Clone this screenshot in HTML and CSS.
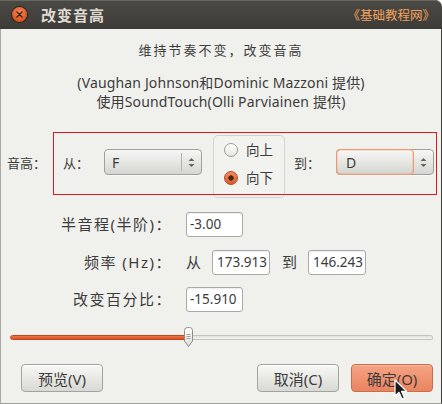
FILE: index.html
```html
<!DOCTYPE html>
<html>
<head>
<meta charset="utf-8">
<link rel="stylesheet" href="styles.css">
</head>
<body>
<div class="window">
  <div class="titlebar">
    <span class="close"><svg width="7" height="7" viewBox="0 0 7 7"><path d="M1 1L6 6M6 1L1 6" stroke="#3b1e12" stroke-width="1.4" stroke-linecap="round"/></svg></span>
    <span class="title">改变音高</span>
    <span class="brand">《基础教程网》</span>
  </div>
  <div class="content">
    <p class="desc">维持节奏不变，改变音高</p>
    <div class="credits">
      <div class="cline">(Vaughan Johnson和Dominic Mazzoni 提供)</div>
      <div class="cline">使用SoundTouch(Olli Parviainen 提供)</div>
    </div>
    <div class="pitch">
      <span class="lbl">音高：</span>
      <span class="lbl from-lbl">从：</span>
      <div class="combo from-combo">
        <span class="combo-val">F</span>
        <span class="combo-arrows"><svg width="7" height="11" viewBox="0 0 7 11"><path d="M3.5 1L6.5 4H0.5Z M3.5 10L6.5 7H0.5Z" fill="#66665f"/></svg></span>
      </div>
      <div class="radios">
        <div class="radio"><span class="dot"></span><span>向上</span></div>
        <div class="radio on"><span class="dot"></span><span>向下</span></div>
      </div>
      <span class="lbl to-lbl">到：</span>
      <div class="combo to-combo focus">
        <span class="combo-val">D</span>
        <span class="combo-arrows"><svg width="7" height="11" viewBox="0 0 7 11"><path d="M3.5 1L6.5 4H0.5Z M3.5 10L6.5 7H0.5Z" fill="#66665f"/></svg></span>
      </div>
      <div class="highlight"></div>
    </div>
    <div class="fields">
      <span class="flabel">半音程(半阶)：</span>
      <div class="fval"><span class="entry">-3.00</span></div>
      <span class="flabel">频率 (Hz)：</span>
      <div class="fval"><span class="word">从</span><span class="entry wide gap-a">173.913</span><span class="word gap-b">到</span><span class="entry wide gap-a">146.243</span></div>
      <span class="flabel">改变百分比：</span>
      <div class="fval"><span class="entry">-15.910</span></div>
    </div>
    <div class="slider">
      <div class="track"><div class="fill" style="width:178px"></div><div class="rest"></div></div>
      <svg class="thumb" style="left:173px" width="11" height="21" viewBox="0 0 11 21">
        <defs><linearGradient id="tg" x1="0" y1="0" x2="0" y2="1"><stop offset="0" stop-color="#ffffff"/><stop offset="1" stop-color="#dcdcd8"/></linearGradient></defs>
        <path d="M1.5 3.5Q1.5 0.5 4.5 0.5H6.5Q9.5 0.5 9.5 3.5V14L5.5 19.5L1.5 14Z" fill="url(#tg)" stroke="#8c8c88"/>
        <path d="M3.5 7.5H7.5M3.5 9.5H7.5M3.5 11.5H7.5" stroke="#a2a29e" stroke-width="1"/>
      </svg>
    </div>
    <div class="buttons">
      <span class="btn first">预览(V)</span>
      <span class="btn">取消(C)</span>
      <span class="btn primary">确定(O)</span>
    </div>
  </div>
</div>
<svg class="cursor" width="14" height="22" viewBox="0 0 14 22"><path d="M1 1V17L5 13.3L8 20L10.5 18.9L7.6 12.4H12.6Z" fill="#1a1a1a" stroke="#ffffff" stroke-width="1.2" stroke-linejoin="round"/></svg>
</body>
</html>
```

FILE: styles.css
```css
* { box-sizing: border-box; }
html, body { margin: 0; padding: 0; }
body {
  width: 442px;
  height: 404px;
  background: #ffffff;
  font-family: "Noto Sans", "Noto Sans CJK SC", sans-serif;
  font-size: 13px;
  color: #3c3c3c;
  position: relative;
  overflow: hidden;
}
.window {
  width: 442px;
  height: 404px;
  display: flex;
  flex-direction: column;
}
.titlebar {
  height: 29px;
  flex: none;
  display: flex;
  align-items: center;
  background: linear-gradient(#4b4a45, #3c3b37);
  border-top-right-radius: 7px;
  box-shadow: inset 0 1px 0 #67665f;
  padding-left: 12px;
  padding-right: 7px;
}
.close {
  width: 15px;
  height: 15px;
  border-radius: 50%;
  background: radial-gradient(circle at 50% 35%, #f8895c, #d8501e 75%);
  box-shadow: 0 0 0 1px #2e241e;
  display: flex;
  align-items: center;
  justify-content: center;
}
.title {
  margin-left: 14px;
  color: #dfdbd2;
  font-weight: bold;
  font-size: 15px;
  letter-spacing: 1px;
  font-family: "Noto Sans CJK SC", sans-serif;
}
.brand {
  margin-left: auto;
  color: #f4a25e;
  font-size: 12.5px;
  font-family: "Noto Sans CJK SC", sans-serif;
}
.content {
  flex: 1;
  background: #f0f0ec;
  border-left: 1px solid #a9a9a5;
  border-right: 1px solid #3f3e3a;
  border-bottom: 1px solid #9e9e9a;
  display: flex;
  flex-direction: column;
}
.desc {
  margin: 12px 0 0;
  line-height: 18px;
  text-align: center;
  letter-spacing: 2px;
}
.credits {
  margin: 13.5px 0 0;
  display: flex;
  flex-direction: column;
  align-items: center;
  font-size: 14px;
  letter-spacing: 0.15px;
}
.cline {
  height: 19px;
  line-height: 19px;
  white-space: nowrap;
}
.pitch {
  position: relative;
  height: 63px;
  margin-top: 24.5px;
  display: flex;
  align-items: flex-start;
  padding-left: 6px;
}
.lbl {
  line-height: 18px;
  margin-top: 19px;
  white-space: nowrap;
}
.from-lbl { margin-left: 17px; }
.to-lbl { margin-left: 9px; }
.combo {
  margin-top: 14px;
  width: 98px;
  height: 26px;
  border: 1px solid #a0a09c;
  border-radius: 4px;
  background: linear-gradient(#f7f7f5, #d5d5d1);
  box-shadow: 0 1px 0 rgba(255,255,255,.6);
  display: flex;
  align-items: center;
}
.from-combo { margin-left: 15px; }
.to-combo { margin-left: 16px; }
.combo-val {
  flex: 1;
  padding-left: 7px;
  font-size: 14px;
}
.combo-arrows {
  width: 20px;
  height: 18px;
  border-left: 1px solid #b2b2ae;
  display: flex;
  align-items: center;
  justify-content: center;
}
.focus .combo-val {
  align-self: stretch;
  margin: -1px 0 -1px -1px;
  border: 1px solid #ef9a72;
  border-radius: 4px;
  display: flex;
  align-items: center;
  padding-left: 9px;
  box-shadow: inset 0 0 0 1px rgba(240, 150, 110, .25);
}
.focus .combo-arrows { border-left: none; width: 19px; }
.radios {
  width: 72px;
  height: 63px;
  margin-left: 11px;
  border: 1px solid #d3d3cf;
  border-radius: 5px;
  background: #f2f2ef;
  padding: 7px 0 0 10px;
  display: flex;
  flex-direction: column;
  gap: 14px;
}
.radio {
  display: flex;
  align-items: center;
  height: 14px;
  gap: 8px;
  line-height: 14px;
  font-size: 13.5px;
}
.dot {
  width: 14px;
  height: 14px;
  border-radius: 50%;
  border: 1px solid #9c9c98;
  background: linear-gradient(#ffffff, #e6e6e2);
}
.on .dot {
  border-color: #b5471d;
  background: radial-gradient(circle, #4a2618 0 2.4px, transparent 3px), linear-gradient(#f38c5f, #dc5a2a);
}
.highlight {
  position: absolute;
  left: 52px;
  top: -3px;
  width: 384px;
  height: 63px;
  border: 1px solid #e3161c;
}
.fields {
  display: grid;
  grid-template-columns: 171px auto;
  column-gap: 14px;
  row-gap: 12.5px;
  margin-top: 14px;
}
.flabel {
  text-align: right;
  line-height: 25px;
  white-space: nowrap;
  font-size: 15px;
  letter-spacing: 1.5px;
}
.fval {
  display: flex;
  align-items: center;
}
.word {
  font-size: 15px;
  line-height: 25px;
}
.entry {
  height: 25px;
  width: 57px;
  background: #ffffff;
  border: 1px solid #a9a9a5;
  border-radius: 3px;
  padding-left: 3px;
  line-height: 23px;
  font-size: 13.5px;
  box-shadow: inset 0 1px 1px rgba(0,0,0,.07);
}
.entry.wide { width: 58px; padding-left: 4px; }
.gap-a { margin-left: 11px; }
.gap-b { margin-left: 12px; }
.slider {
  position: relative;
  height: 20px;
  margin: 15px 8px 0 9px;
  display: flex;
  align-items: center;
}
.track {
  flex: 1;
  display: flex;
  height: 5px;
}
.fill {
  height: 5px;
  background: linear-gradient(#f0754a, #d9511f);
  border: 1px solid #c2481c;
  border-radius: 3px 0 0 3px;
}
.rest {
  flex: 1;
  height: 5px;
  background: linear-gradient(#e0e0dc, #f4f4f2);
  border: 1px solid #c4c4c0;
  border-left: none;
  border-radius: 0 3px 3px 0;
}
.thumb {
  position: absolute;
  top: 0;
}
.buttons {
  display: flex;
  margin-top: 17px;
  padding: 0 8px 0 20px;
  gap: 12px;
}
.btn {
  width: 82px;
  height: 28px;
  border: 1px solid #a3a39f;
  border-radius: 4px;
  background: linear-gradient(#f8f8f6, #d8d8d4);
  box-shadow: inset 0 1px 0 #ffffff;
  display: flex;
  align-items: center;
  justify-content: center;
  font-size: 15px;
}
.btn.first { margin-right: auto; }
.btn.primary {
  background: linear-gradient(#f5a384, #ea8460);
  border-color: #c4704e;
  box-shadow: inset 0 1px 0 #f8b89e;
}
.cursor {
  position: absolute;
  left: 394px;
  top: 379px;
}
```
